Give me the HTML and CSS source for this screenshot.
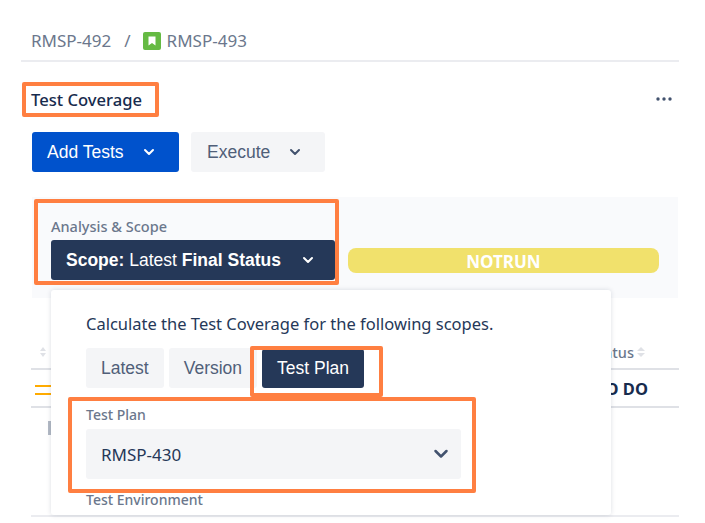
FILE: index.html
```html
<!DOCTYPE html>
<html lang="en">
<head>
<meta charset="utf-8">
<title>Test Coverage</title>
<link rel="stylesheet" href="styles.css">
</head>
<body>
<div class="page">
  <nav class="crumbs">
    <span>RMSP-492</span>
    <span class="sep">/</span>
    <svg class="story" width="18" height="18" viewBox="0 0 18 18"><rect width="18" height="18" rx="2" fill="#65ba43"/><path d="M5.500 4.500h7v9L9 11l-3.500 2.500z" fill="#fff"/></svg>
    <span>RMSP-493</span>
  </nav>
  <header class="head">
    <h2 class="title">Test Coverage</h2>
    <svg class="more" width="16" height="4" viewBox="0 0 16 4"><circle cx="2" cy="2" r="1.700"/><circle cx="8" cy="2" r="1.700"/><circle cx="14" cy="2" r="1.700"/></svg>
  </header>
  <div class="actions">
    <button class="btn primary">Add Tests <svg class="chev" width="12" height="8" viewBox="0 0 12 8"><path d="M2 2l4 4 4-4"/></svg></button>
    <button class="btn secondary">Execute <svg class="chev" width="12" height="8" viewBox="0 0 12 8"><path d="M2 2l4 4 4-4"/></svg></button>
  </div>
  <section class="panel">
    <div class="scope">
      <div class="label scope-label">Analysis &amp; Scope</div>
      <button class="scope-btn"><span><b>Scope:</b> Latest <b>Final Status</b></span><svg class="chev" width="12" height="8" viewBox="0 0 12 8"><path d="M2 2l4 4 4-4"/></svg></button>
    </div>
    <div class="status-bar">NOTRUN</div>
  </section>
  <div class="thead">
    <svg class="sort" width="8" height="12" viewBox="0 0 8 12"><path d="M4 1l3 4H1zM4 11l3-4H1z"/></svg>
    <span class="th">Status<svg class="sort" width="10" height="12" viewBox="0 0 10 12"><path d="M5 1l4 4H1zM5 11l4-4H1z"/></svg></span>
  </div>
  <div class="trow">
    <svg class="priority" width="16" height="10" viewBox="0 0 16 10"><path d="M0 1h16M0 9h16" stroke="#ffab00" stroke-width="2"/></svg>
    <span class="todo">TO DO</span>
  </div>
  <div class="detail"><i class="stub"></i></div>
  <div class="rule"></div>

  <div class="popover">
    <p class="intro">Calculate the Test Coverage for the following scopes.</p>
    <div class="tabs">
      <button class="tab">Latest</button>
      <button class="tab">Version</button>
      <button class="tab active">Test Plan</button>
    </div>
    <div class="label field-label">Test Plan</div>
    <div class="select"><span>RMSP-430</span><svg width="16" height="10" viewBox="0 0 16 10"><path d="M2.500 2l5.500 5.500L13.500 2"/></svg></div>
    <div class="label env-label">Test Environment</div>
  </div>

  <i class="mark mark-title"></i>
  <i class="mark mark-scope"></i>
  <i class="mark mark-tab"></i>
  <i class="mark mark-plan"></i>
</div>
</body>
</html>
```
FILE: styles.css
```css
* { box-sizing: border-box; }
html, body { margin: 0; height: 523px; overflow: hidden; background: #fff; }
body { font-family: "Noto Sans", sans-serif; color: #172b4d; }
.page { position: relative; width: 705px; height: 523px; padding: 0 26px 0 21px; }
.crumbs { height: 62px; padding: 30px 0 9px 10px; display: flex; align-items: center; border-bottom: 2px solid #ebecf0; color: #6b778c; font-size: 17px; line-height: 22px; }
.sep { margin: 0 12px 0 13px; }
.story { margin-right: 6px; }
.head { height: 38px; margin-top: 18px; padding: 0 7px 0 10px; display: flex; justify-content: space-between; align-items: center; }
.title { margin: 2px 0 0; font-size: 16.600px; line-height: 36px; font-weight: 500; color: #172b4d; }
.more { fill: #42526e; }
.actions { display: flex; gap: 12px; margin: 14px 0 0 11px; }
.btn { height: 40px; border: 0; border-radius: 3px; padding: 0 15px; display: flex; align-items: center; font: 17.500px "Liberation Sans", sans-serif; }
.primary { width: 147px; background: #0052cc; color: #fff; }
.secondary { width: 134px; padding-left: 16px; background: #f4f5f7; color: #505f79; }
.chev { fill: none; stroke: currentColor; stroke-width: 2; stroke-linecap: round; stroke-linejoin: round; margin-left: 19px; }
.secondary .chev { color: #42526e; }
.panel { height: 101px; margin: 25px 1px 0 11px; padding: 0 19px; background: #f9fafc; display: flex; align-items: flex-end; }
.scope { width: 284px; margin-bottom: 18px; }
.label { font-size: 14px; line-height: 20px; font-weight: 500; color: #6b778c; }
.scope-label { font-size: 14.500px; line-height: 18px; }
.scope-btn { width: 284px; height: 40px; margin-top: 5px; padding: 0 21px 0 15px; border: 0; border-radius: 3px; background: #253858; color: #fff; display: flex; justify-content: space-between; align-items: center; font: 17.500px "Liberation Sans", sans-serif; }
.scope-btn .chev { margin: 0; }
.status-bar { flex: 1; height: 25px; margin: 0 0 25px 13px; border-radius: 8px; background: #f1e16c; color: #fff; text-align: center; font-size: 17px; line-height: 27px; font-weight: 700; }
.thead { height: 72px; margin-left: 10px; padding: 38px 15px 0 8px; display: flex; justify-content: space-between; align-items: center; border-bottom: 2px solid #dfe1e6; }
.sort { fill: #dfe1e6; }
.th { margin-right: 18px; font-size: 14.500px; font-weight: 500; color: #6b778c; display: flex; align-items: center; gap: 2px; }
.trow { height: 38px; margin-left: 10px; padding: 1px 31px 0 4px; display: flex; justify-content: space-between; align-items: center; border-bottom: 2px solid #dfe1e6; font-size: 16.500px; font-weight: 700; }
.priority { margin-top: 3px; }
.todo { color: #172b4d; }
.detail { height: 107px; margin-left: 10px; padding: 13px 0 0 17px; }
.stub { display: block; width: 3px; height: 14px; background: #b3bac5; }
.rule { height: 2px; margin-left: 10px; background: #ebecf0; }
.popover { position: absolute; left: 51px; top: 290px; width: 560px; height: 225px; padding: 0 35px; background: #fff; border-radius: 3px; box-shadow: 0 0 5px rgba(9, 30, 66, .14); }
.intro { margin: 0; padding-top: 23px; font-size: 16.500px; line-height: 22px; color: #253858; }
.tabs { display: flex; gap: 5px; margin-top: 13px; }
.tab { height: 40px; padding: 0 15px; border: 0; border-radius: 3px; background: #f4f5f7; color: #505f79; font: 17.500px "Liberation Sans", sans-serif; }
.tab.active { height: 39px; margin-top: 1px; padding: 0 15px; background: #253858; color: #fff; }
.field-label { margin-top: 17px; }
.select { width: 375px; height: 50px; margin-top: 4px; padding: 0 12px 0 15px; border-radius: 3px; background: #f4f5f7; display: flex; justify-content: space-between; align-items: center; font-size: 17px; color: #253858; }
.select svg { fill: none; stroke: #42526e; stroke-width: 2.500; stroke-linecap: round; stroke-linejoin: round; }
.env-label { margin-top: 11px; }
.mark { position: absolute; border: 4px solid #ff7f41; border-radius: 2px; }
.mark-title { left: 22px; top: 82px; width: 137px; height: 35px; }
.mark-scope { left: 34px; top: 199px; width: 305px; height: 86px; }
.mark-tab { left: 250px; top: 346px; width: 133px; height: 51px; }
.mark-plan { left: 68px; top: 397px; width: 408px; height: 96px; }
```
